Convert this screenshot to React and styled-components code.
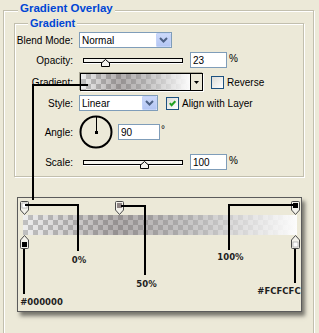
import React from "react";
import styled, { createGlobalStyle } from "styled-components";

const GlobalStyle = createGlobalStyle`
  html, body { margin: 0; padding: 0; background: #ECE9D8; }
  #root { width: 319px; height: 333px; }
`;

const Page = styled.div`
  position: relative;
  width: 319px;
  height: 333px;
  overflow: hidden;
  background: #ECE9D8;
  font-family: "Liberation Sans", Arial, sans-serif;
  font-size: 10px;
  color: #000;
`;

const GroupBox = styled.div`
  box-sizing: border-box;
  width: ${(p) => p.$w}px;
  height: ${(p) => p.$h}px;
  margin: ${(p) => p.$m};
  border: 1px solid #C2BFAE;
  box-shadow: inset 1px 1px 0 #fff, 1px 1px 0 #fff;
`;

const GroupTitle = styled.div`
  width: fit-content;
  margin: ${(p) => p.$m};
  padding: 0 2px;
  background: #ECE9D8;
  color: #0046D5;
  font-weight: bold;
  font-size: ${(p) => p.$size}px;
  line-height: 13px;
  white-space: nowrap;
`;

const Row = styled.div`
  display: flex;
  align-items: center;
  height: ${(p) => p.$h}px;
  margin-top: ${(p) => p.$mt}px;
`;

const Label = styled.span`
  flex: none;
  width: 58px;
  margin-right: 6px;
  text-align: right;
  white-space: nowrap;
`;

const Select = styled.div`
  box-sizing: border-box;
  flex: none;
  display: flex;
  align-items: center;
  width: ${(p) => p.$w}px;
  height: 16px;
  background: #fff;
  border: 1px solid #7F9DB9;
`;

const SelectText = styled.span`
  flex: 1;
  padding-left: 2px;
  white-space: nowrap;
`;

const SelectButton = styled.span`
  box-sizing: border-box;
  flex: none;
  display: flex;
  align-items: center;
  justify-content: center;
  width: 15px;
  height: 14px;
  background: linear-gradient(180deg, #CCD9FA 0%, #B4C6F3 100%);
  border: 1px solid #C4D3F8;
  border-radius: 1px;
`;

const SliderBox = styled.div`
  position: relative;
  flex: none;
  box-sizing: border-box;
  width: 100px;
  height: 16px;
  margin-left: 4px;
  padding-top: 6px;
`;

const Track = styled.div`
  box-sizing: border-box;
  height: 5px;
  border: 1px solid #000;
  background: #F5F4EE;
  box-shadow: 0 1px 0 #fff;
`;

const Thumb = styled.svg`
  position: absolute;
  top: 7px;
  width: 9px;
  height: 8px;
`;

const Field = styled.input`
  box-sizing: border-box;
  flex: none;
  width: ${(p) => p.$w}px;
  height: 16px;
  margin: 0 0 0 ${(p) => p.$ml}px;
  padding: 0 0 0 2px;
  border: 1px solid #7F9DB9;
  background: #fff;
  font: inherit;
  color: #000;
  outline: none;
`;

const Unit = styled.span`
  margin-left: 2px;
  margin-bottom: 3px;
`;

const Degree = styled.span`
  align-self: flex-start;
  margin: 10px 0 0 1px;
  line-height: 10px;
`;

const checker = `repeating-conic-gradient(#CDCDCD 0 25%, #FFFFFF 0 50%) 0 0 / 10px 10px`;
const ramp = `linear-gradient(to right, rgba(40,40,40,0.08) 0%, rgba(70,60,60,0.42) 35%, rgba(150,148,148,0.55) 60%, rgba(252,252,252,1) 100%)`;

const GradientPicker = styled.div`
  box-sizing: border-box;
  flex: none;
  display: flex;
  width: 123px;
  height: 18px;
  margin-left: 1px;
  border: 1px solid #000;
  box-shadow: 1px 1px 0 #fff, -1px -1px 0 #A9A695;
`;

const GradientPreview = styled.div`
  flex: 1;
  background: ${ramp}, ${checker};
`;

const PickerArrow = styled.div`
  flex: none;
  display: flex;
  align-items: center;
  justify-content: center;
  width: 11px;
  border-left: 1px solid #000;
  background: #ECE9D8;
`;

const CheckBox = styled.span`
  box-sizing: border-box;
  flex: none;
  display: flex;
  align-items: center;
  justify-content: center;
  width: 13px;
  height: 13px;
  margin-left: ${(p) => p.$ml}px;
  border: 1px solid #1C5180;
  background: linear-gradient(135deg, #DCDCD7 0%, #FFFFFF 100%);
`;

const CheckLabel = styled.span`
  margin-left: 3px;
  white-space: nowrap;
`;

const Dial = styled.svg`
  flex: none;
  width: 34px;
  height: 34px;
`;

const Panel = styled.div`
  box-sizing: border-box;
  width: 285px;
  height: 115px;
  margin: 20px 0 0 13px;
  border: 1px solid #5B5B5B;
  background: #ECE9D8;
  box-shadow: 3px 4px 4px rgba(0, 0, 0, 0.5);
`;

const Editor = styled.div`
  position: relative;
  width: 274px;
  height: 20px;
  margin: 17px 0 0 5px;
`;

const Bar = styled.div`
  height: 100%;
  background: ${ramp}, ${checker};
`;

const Stop = styled.svg`
  position: absolute;
  top: ${(p) => (p.$side === "top" ? "-14px" : "20px")};
  width: 9px;
  height: 14px;
`;

const Annotations = styled.svg`
  position: absolute;
  left: 0;
  top: 0;
  width: 319px;
  height: 333px;
  pointer-events: none;
`;

const Note = styled.span`
  position: absolute;
  left: ${(p) => p.$x}px;
  top: ${(p) => p.$y}px;
  transform: translateX(-50%);
  font-family: "DejaVu Sans", Verdana, sans-serif;
  font-weight: bold;
  font-size: 8.5px;
  line-height: 10px;
  color: #1E1E1E;
  white-space: nowrap;
`;

const Chevron = () => (
  <svg width="9" height="6" viewBox="0 0 9 6">
    <polyline points="1,1 4.5,4.5 8,1" fill="none" stroke="#4D6185" strokeWidth="2" />
  </svg>
);

const Combo = ({ w, value }) => (
  <Select $w={w}>
    <SelectText>{value}</SelectText>
    <SelectButton>
      <Chevron />
    </SelectButton>
  </Select>
);

const Slider = ({ pos }) => (
  <SliderBox>
    <Track />
    <Thumb viewBox="0 0 9 8" style={{ left: `calc(${pos * 100}% - 4.5px)` }}>
      <path d="M4.5 0.5 L8.5 4 V7.5 H0.5 V4 Z" fill="#F4F3EE" stroke="#000" />
    </Thumb>
  </SliderBox>
);

const Check = ({ ml, checked }) => (
  <CheckBox $ml={ml}>
    {checked && (
      <svg width="7" height="7" viewBox="0 0 7 7">
        <polyline points="0.8,3.2 2.6,5.2 6.3,1.2" fill="none" stroke="#21A121" strokeWidth="2" />
      </svg>
    )}
  </CheckBox>
);

const opacityStops = [
  { loc: 0, fill: "#FFFFFF" },
  { loc: 0.353, fill: "#8E8484" },
  { loc: 1, fill: "#000000" },
];
const colorStops = [
  { loc: 0, fill: "#000000" },
  { loc: 1, fill: "#FCFCFC" },
];
const stopLeft = (loc) => ({ left: `${1.5 + loc * 270.5 - 4.5}px` });

const TopStop = ({ loc, fill }) => (
  <Stop $side="top" viewBox="0 0 9 14" style={stopLeft(loc)}>
    <path d="M1.5 0.5 H7.5 Q8.5 0.5 8.5 1.5 V9 L4.5 13.5 L0.5 9 V1.5 Q0.5 0.5 1.5 0.5 Z" fill="#F2F1EA" stroke="#4A4A4A" />
    <rect x="2" y="2" width="5" height="5" fill={fill} stroke={fill === "#FFFFFF" ? "#9A9A9A" : "none"} strokeWidth="0.6" />
  </Stop>
);

const BottomStop = ({ loc, fill }) => (
  <Stop $side="bottom" viewBox="0 0 9 14" style={stopLeft(loc)}>
    <path d="M4.5 0.5 L8.5 5 V12.5 Q8.5 13.5 7.5 13.5 H1.5 Q0.5 13.5 0.5 12.5 V5 Z" fill="#F2F1EA" stroke="#4A4A4A" />
    <rect x="2" y="7" width="5" height="5" fill={fill} stroke={fill === "#FCFCFC" ? "#9A9A9A" : "none"} strokeWidth="0.6" />
  </Stop>
);

const callouts = [
  "M88 85 H33 V200",
  "M25 205 H78 V251",
  "M121 206 H145 V275",
  "M295 205 H229 V250",
  "M24 249 V294",
  "M295 249 V283",
];

const notes = [
  { x: 79, y: 255, t: "0%" },
  { x: 146.5, y: 279, t: "50%" },
  { x: 230.5, y: 252, t: "100%" },
  { x: 41.5, y: 297, t: "#000000" },
  { x: 279, y: 285.5, t: "#FCFCFC" },
];

export default function App() {
  return (
    <Page>
      <GlobalStyle />
      <GroupBox $w={311} $h={340} $m="10px 0 0 3px">
        <GroupTitle $m="-9px 0 0 14px" $size={11.5}>Gradient Overlay</GroupTitle>
        <GroupBox $w={290} $h={154} $m="8px 0 0 10px">
          <GroupTitle $m="-7px 0 0 13px" $size={11}>Gradient</GroupTitle>

          <Row $h={16} $mt={2}>
            <Label>Blend Mode:</Label>
            <Combo w={93} value="Normal" />
          </Row>

          <Row $h={16} $mt={4}>
            <Label>Opacity:</Label>
            <Slider pos={0.225} />
            <Field $w={37} $ml={7} value="23" readOnly />
            <Unit>%</Unit>
          </Row>

          <Row $h={18} $mt={5}>
            <Label>Gradient:</Label>
            <GradientPicker>
              <GradientPreview />
              <PickerArrow>
                <svg width="5" height="3" viewBox="0 0 5 3">
                  <path d="M0 0 H5 L2.5 3 Z" fill="#000" />
                </svg>
              </PickerArrow>
            </GradientPicker>
            <Check ml={8} />
            <CheckLabel>Reverse</CheckLabel>
          </Row>

          <Row $h={16} $mt={4}>
            <Label>Style:</Label>
            <Combo w={79} value="Linear" />
            <Check ml={8} checked />
            <CheckLabel>Align with Layer</CheckLabel>
          </Row>

          <Row $h={34} $mt={4}>
            <Label>Angle:</Label>
            <Dial viewBox="0 0 34 34">
              <circle cx="17" cy="17" r="15.5" fill="none" stroke="#000" strokeWidth="2" />
              <line x1="17.5" y1="17" x2="17.5" y2="2" stroke="#000" strokeWidth="1" />
              <rect x="16" y="16" width="3" height="3" fill="#000" />
            </Dial>
            <Field $w={42} $ml={5} value="90" readOnly />
            <Degree>°</Degree>
          </Row>

          <Row $h={16} $mt={5}>
            <Label>Scale:</Label>
            <Slider pos={0.615} />
            <Field $w={37} $ml={7} value="100" readOnly />
            <Unit>%</Unit>
          </Row>
        </GroupBox>

        <Panel>
          <Editor>
            <Bar />
            {opacityStops.map((s, i) => (
              <TopStop key={"o" + i} {...s} />
            ))}
            {colorStops.map((s, i) => (
              <BottomStop key={"c" + i} {...s} />
            ))}
          </Editor>
        </Panel>
      </GroupBox>

      <Annotations viewBox="0 0 319 333">
        {callouts.map((d, i) => (
          <path key={i} d={d} fill="none" stroke="#000" strokeWidth="2" />
        ))}
      </Annotations>
      {notes.map((n) => (
        <Note key={n.t} $x={n.x} $y={n.y}>
          {n.t}
        </Note>
      ))}
    </Page>
  );
}
